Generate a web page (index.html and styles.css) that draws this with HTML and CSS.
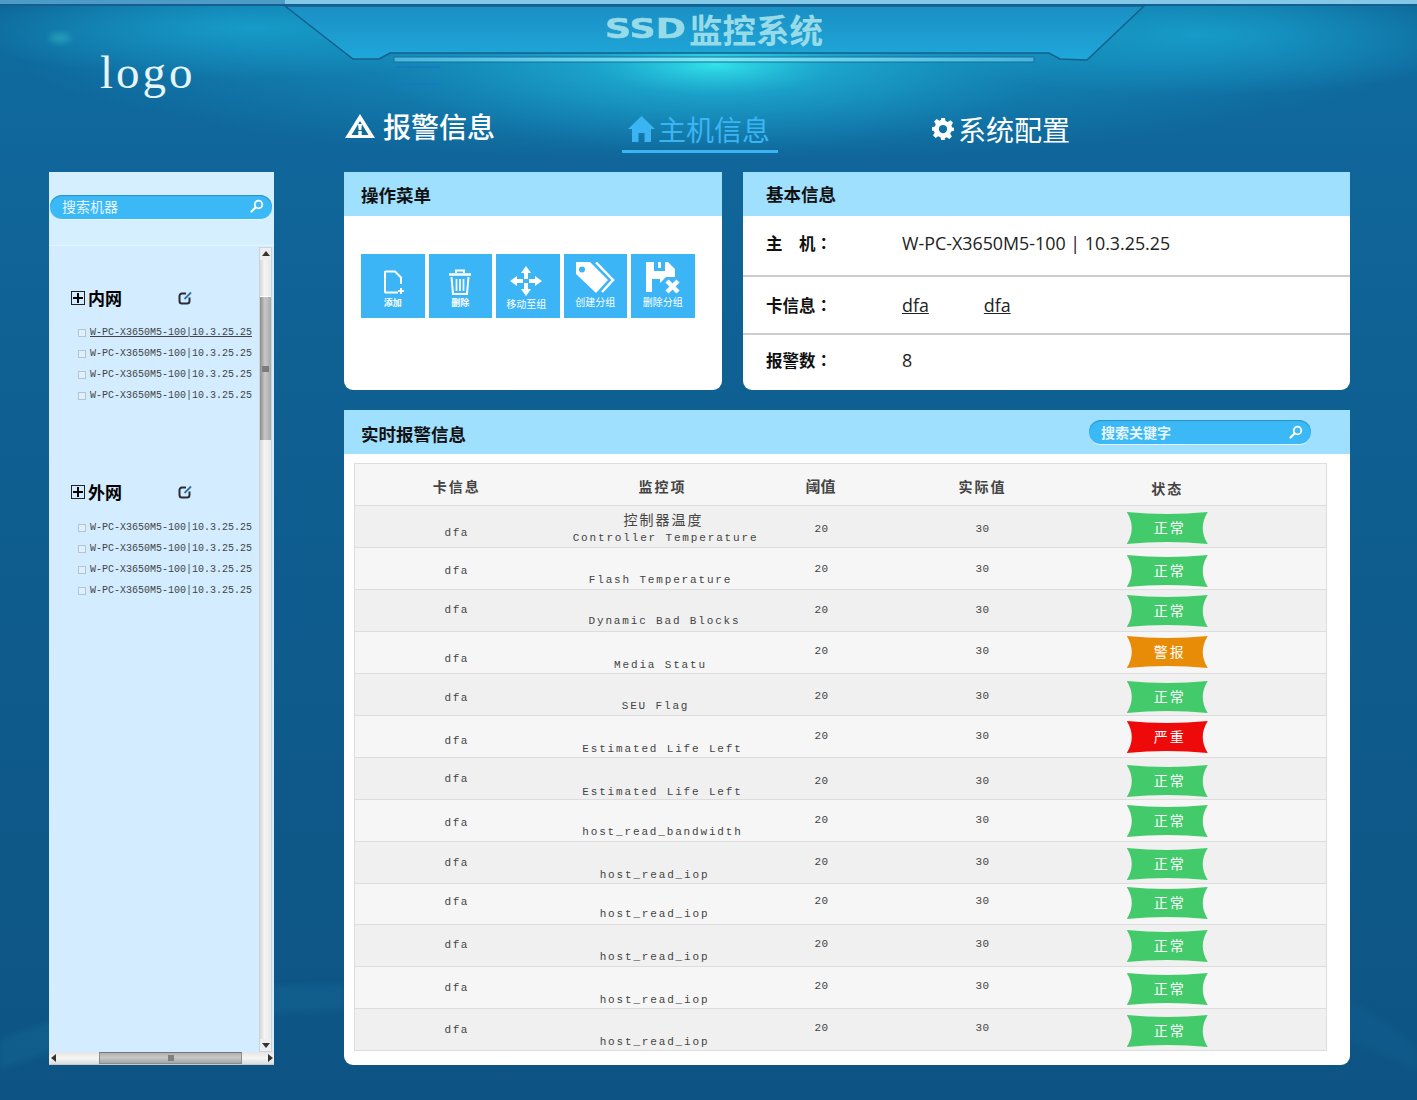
FILE: index.html
```html
<!DOCTYPE html>
<html lang="zh-CN">
<head>
<meta charset="utf-8">
<title>SSD监控系统</title>
<link rel="stylesheet" href="styles.css">
</head>
<body>
<svg class="decor" viewBox="0 0 1417 1100" preserveAspectRatio="none" aria-hidden="true">
  <defs>
    <radialGradient id="glow">
      <stop offset="0" stop-color="#33e8ec" stop-opacity=".95"/>
      <stop offset=".35" stop-color="#22bcdc" stop-opacity=".5"/>
      <stop offset="1" stop-color="#18a0cc" stop-opacity="0"/>
    </radialGradient>
    <radialGradient id="wide">
      <stop offset="0" stop-color="#18a4d0" stop-opacity=".8"/>
      <stop offset="1" stop-color="#18a4d0" stop-opacity="0"/>
    </radialGradient>
    <linearGradient id="plate" x1="0" y1="0" x2="0" y2="1">
      <stop offset="0" stop-color="#1a8fc4"/>
      <stop offset="1" stop-color="#1fa8da"/>
    </linearGradient>
    <linearGradient id="bar" x1="0" y1="0" x2="1" y2="0">
      <stop offset="0" stop-color="#4ab4dc"/>
      <stop offset=".5" stop-color="#7fe8f4"/>
      <stop offset="1" stop-color="#4ab4dc"/>
    </linearGradient>
    <filter id="soft" x="-10%" y="-30%" width="120%" height="160%"><feGaussianBlur stdDeviation="3"/></filter>
  </defs>
  <ellipse cx="715" cy="40" rx="720" ry="120" fill="url(#wide)"/>
  <ellipse cx="250" cy="28" rx="300" ry="50" fill="url(#wide)"/>
  <ellipse cx="1200" cy="35" rx="300" ry="60" fill="url(#wide)"/>
  <ellipse cx="715" cy="64" rx="340" ry="90" fill="url(#glow)"/>
  <path d="M285 6H1144L1087 60 1060 59 1049 53H390L379 59H353Z" fill="url(#plate)" stroke="#14608c" stroke-width="1.5"/>
  <rect x="394" y="57" width="640" height="5" fill="url(#bar)" stroke="#14709c"/>
  <rect x="0" y="0" width="285" height="4" fill="#4d9cc8"/>
  <rect x="285" y="0" width="1132" height="4" fill="#84c8e8"/>
  <rect x="0" y="4" width="1417" height="2" fill="#145f90"/>
  <path d="M395 67H440M395 84H440" stroke="#1878c0" stroke-width="2" opacity=".8"/>
  <ellipse cx="60" cy="38" rx="11" ry="5" fill="#3cc4c8" opacity=".45" filter="url(#soft)"/>
  <path d="M0 1040C100 1000 200 985 344 985V1010C200 1012 100 1030 0 1070Z" fill="#1a7ca8" opacity=".22" filter="url(#soft)"/>
  <path d="M1350 1000C1380 1020 1400 1030 1417 1050V1070L1350 1040Z" fill="#1a7ca8" opacity=".12" filter="url(#soft)"/>
</svg>

<header class="header">
  <div class="logo">logo</div>
  <div class="header-main">
    <h1 class="site-title"><span class="ssd">SSD</span><span class="site-cn">监控系统</span></h1>
    <nav class="nav">
      <a class="nav-item nav-alarm">
        <svg class="ico-warn" viewBox="0 0 30 24"><path fill-rule="evenodd" d="M15 0 30 24H0ZM15 7 6.500 21H23.500Z" fill="#fff"/><path d="M13 10H17L16.300 16H13.700ZM13.300 17H16.700V21H13.300Z" fill="#fff"/></svg>
        <span>报警信息</span>
      </a>
      <a class="nav-item nav-host">
        <svg class="ico-home" viewBox="0 0 27 26"><path d="M13.500 0 27 13H23V26H16.500V17H10.500V26H4V13H0Z" fill="#3bb4f4"/></svg>
        <span>主机信息</span>
      </a>
      <a class="nav-item nav-sys">
        <svg class="ico-gear" viewBox="0 0 24 24"><path fill-rule="evenodd" d="M10 0H14L14.800 3.300 17.200 4.300 20.100 2.500 22.900 5.300 21.100 8.200 22.100 10.300 24 10.500V14L20.900 14.800 19.900 17.200 21.700 20.100 18.900 22.900 16 21.100 14 22 14 24H10L9.200 20.900 6.800 19.900 3.900 21.700 1.100 18.900 2.900 16 1.900 13.800 0 14V10L3.100 9.200 4.100 6.800 2.300 3.900 5.100 1.100 8 2.900 10 2ZM12 7.500A4.500 4.500 0 1 0 12 16.500 4.500 4.500 0 1 0 12 7.500Z" fill="#fff"/></svg>
        <span>系统配置</span>
      </a>
    </nav>
  </div>
</header>

<main class="main">
  <aside class="sidebar">
    <div class="side-top">
      <div class="search search-side">
        <span>搜索机器</span>
        <svg class="ico-search" viewBox="0 0 14 14"><circle cx="8.500" cy="5.500" r="3.800" fill="none" stroke="#fff" stroke-width="1.800"/><path d="M5.500 8.500 1.500 12.500" stroke="#fff" stroke-width="2.200" stroke-linecap="round"/></svg>
      </div>
    </div>
    <div class="side-body">
      <div class="tree">
        <section class="group group-in">
          <div class="group-head">
            <span class="plus"></span><strong>内网</strong>
            <svg class="ico-edit" viewBox="0 0 15 14"><path d="M8 2.500H4A2.500 2.500 0 0 0 1.500 5V10A2.500 2.500 0 0 0 4 12.500H9A2.500 2.500 0 0 0 11.500 10V6.500" fill="none" stroke="#2b2b3a" stroke-width="2"/><path d="M6.500 8 13 1.500" stroke="#2f6fb0" stroke-width="1.800"/></svg>
          </div>
          <ul class="hosts">
            <li><i></i><a class="active">W-PC-X3650M5-100|10.3.25.25</a></li>
            <li><i></i><a>W-PC-X3650M5-100|10.3.25.25</a></li>
            <li><i></i><a>W-PC-X3650M5-100|10.3.25.25</a></li>
            <li><i></i><a>W-PC-X3650M5-100|10.3.25.25</a></li>
          </ul>
        </section>
        <section class="group group-out">
          <div class="group-head">
            <span class="plus"></span><strong>外网</strong>
            <svg class="ico-edit" viewBox="0 0 15 14"><path d="M8 2.500H4A2.500 2.500 0 0 0 1.500 5V10A2.500 2.500 0 0 0 4 12.500H9A2.500 2.500 0 0 0 11.500 10V6.500" fill="none" stroke="#2b2b3a" stroke-width="2"/><path d="M6.500 8 13 1.500" stroke="#2f6fb0" stroke-width="1.800"/></svg>
          </div>
          <ul class="hosts">
            <li><i></i><a>W-PC-X3650M5-100|10.3.25.25</a></li>
            <li><i></i><a>W-PC-X3650M5-100|10.3.25.25</a></li>
            <li><i></i><a>W-PC-X3650M5-100|10.3.25.25</a></li>
            <li><i></i><a>W-PC-X3650M5-100|10.3.25.25</a></li>
          </ul>
        </section>
      </div>
      <div class="vbar">
        <span class="arrow arrow-up"></span>
        <span class="vgap"></span>
        <span class="vthumb"><b></b></span>
        <span class="vrest"></span>
        <span class="arrow arrow-down"></span>
      </div>
    </div>
    <div class="hbar">
      <span class="arrow arrow-left"></span>
      <span class="hthumb"><b></b></span>
      <span class="arrow arrow-right"></span>
    </div>
  </aside>

  <div class="content">
    <div class="top-row">
      <section class="card card-ops">
        <h2 class="card-head">操作菜单</h2>
        <div class="ops">
          <a class="op op-a">
            <svg viewBox="0 0 24 28"><path d="M4 3.500H14L20 9.500V16M17 24.500H4Z" fill="none" stroke="#fff" stroke-width="2"/><path d="M4 3V25" stroke="#fff" stroke-width="2"/><path d="M20 20V26M17 23H23" stroke="#fff" stroke-width="2"/></svg>
            <span class="bold">添加</span>
          </a>
          <a class="op op-b">
            <svg viewBox="0 0 24 28"><path d="M1 6.500H23" stroke="#fff" stroke-width="2.400"/><path d="M8 5V2.500H16V5" fill="none" stroke="#fff" stroke-width="2"/><path d="M3.500 9 5 26H19L20.500 9" fill="none" stroke="#fff" stroke-width="2"/><path d="M8.500 11V23M12 11V23M15.500 11V23" stroke="#fff" stroke-width="1.700"/></svg>
            <span class="bold">删除</span>
          </a>
          <a class="op op-c">
            <svg viewBox="0 0 32 30"><path d="M16 0 21 7H18V13H14V7H11ZM16 30 11 23H14V17H18V23H21ZM0 15 7 10V13H13V17H7V20ZM32 15 25 20V17H19V13H25V10Z" fill="#fff"/></svg>
            <span>移动至组</span>
          </a>
          <a class="op op-d">
            <svg viewBox="0 0 40 32"><path fill-rule="evenodd" d="M1 0H15L33 18 21 31 1 12ZM7 4.500A3 3 0 1 0 7 10.500 3 3 0 1 0 7 4.500Z" fill="#fff"/><path d="M21 0.500 38 18 27 30" fill="none" stroke="#fff" stroke-width="2.500"/></svg>
            <span>创建分组</span>
          </a>
          <a class="op op-e">
            <svg viewBox="0 0 34 32"><path fill-rule="evenodd" d="M0 0H22L29 7V15H20L14 21V30H0ZM8 0V9H19V0H15V6H12V0ZM6 17H14V30H6Z" fill="#fff"/><path d="M21 19 32 30M32 19 21 30" stroke="#fff" stroke-width="4.500"/></svg>
            <span>删除分组</span>
          </a>
        </div>
      </section>

      <section class="card card-info">
        <h2 class="card-head">基本信息</h2>
        <dl class="info">
          <div class="info-row info-1"><dt lang="zh-TW">主&emsp;机：</dt><dd>W-PC-X3650M5-100 | 10.3.25.25</dd></div>
          <div class="info-row info-2"><dt lang="zh-TW">卡信息：</dt><dd><a>dfa</a><a>dfa</a></dd></div>
          <div class="info-row info-3"><dt lang="zh-TW">报警数：</dt><dd>8</dd></div>
        </dl>
      </section>
    </div>

    <section class="card panel">
      <div class="card-head panel-head">
        <h2>实时报警信息</h2>
        <div class="search search-panel">
          <span>搜索关键字</span>
          <svg class="ico-search" viewBox="0 0 14 14"><circle cx="8.500" cy="5.500" r="3.800" fill="none" stroke="#fff" stroke-width="1.800"/><path d="M5.500 8.500 1.500 12.500" stroke="#fff" stroke-width="2.200" stroke-linecap="round"/></svg>
        </div>
      </div>
      <table class="grid">
        <colgroup><col class="w1"><col class="w2"><col class="w3"><col class="w4"><col class="w5"></colgroup>
        <thead>
          <tr><th class="th1">卡信息</th><th class="th2">监控项</th><th class="th3">阈值</th><th class="th4">实际值</th><th class="th5">状态</th></tr>
        </thead>
        <tbody>
          <tr class="r r1"><td class="c">dfa</td><td class="i"><span class="cn">控制器温度</span><br>Controller Temperature</td><td class="t">20</td><td class="t a">30</td><td class="b"><span class="badge ok">正常</span></td></tr>
          <tr class="r r2"><td class="c">dfa</td><td class="i">Flash Temperature</td><td class="t">20</td><td class="t a">30</td><td class="b"><span class="badge ok">正常</span></td></tr>
          <tr class="r r3"><td class="c">dfa</td><td class="i">Dynamic Bad Blocks</td><td class="t">20</td><td class="t a">30</td><td class="b"><span class="badge ok">正常</span></td></tr>
          <tr class="r r4"><td class="c">dfa</td><td class="i">Media Statu</td><td class="t">20</td><td class="t a">30</td><td class="b"><span class="badge warn">警报</span></td></tr>
          <tr class="r r5"><td class="c">dfa</td><td class="i">SEU Flag</td><td class="t">20</td><td class="t a">30</td><td class="b"><span class="badge ok">正常</span></td></tr>
          <tr class="r r6"><td class="c">dfa</td><td class="i">Estimated Life Left</td><td class="t">20</td><td class="t a">30</td><td class="b"><span class="badge bad">严重</span></td></tr>
          <tr class="r r7"><td class="c">dfa</td><td class="i">Estimated Life Left</td><td class="t">20</td><td class="t a">30</td><td class="b"><span class="badge ok">正常</span></td></tr>
          <tr class="r r8"><td class="c">dfa</td><td class="i">host_read_bandwidth</td><td class="t">20</td><td class="t a">30</td><td class="b"><span class="badge ok">正常</span></td></tr>
          <tr class="r r9"><td class="c">dfa</td><td class="i">host_read_iop</td><td class="t">20</td><td class="t a">30</td><td class="b"><span class="badge ok">正常</span></td></tr>
          <tr class="r r10"><td class="c">dfa</td><td class="i">host_read_iop</td><td class="t">20</td><td class="t a">30</td><td class="b"><span class="badge ok">正常</span></td></tr>
          <tr class="r r11"><td class="c">dfa</td><td class="i">host_read_iop</td><td class="t">20</td><td class="t a">30</td><td class="b"><span class="badge ok">正常</span></td></tr>
          <tr class="r r12"><td class="c">dfa</td><td class="i">host_read_iop</td><td class="t">20</td><td class="t a">30</td><td class="b"><span class="badge ok">正常</span></td></tr>
          <tr class="r r13"><td class="c">dfa</td><td class="i">host_read_iop</td><td class="t">20</td><td class="t a">30</td><td class="b"><span class="badge ok">正常</span></td></tr>
        </tbody>
      </table>
    </section>
  </div>
</main>
</body>
</html>
```
FILE: styles.css
```css
* { box-sizing: border-box; }
html, body { margin: 0; padding: 0; }
body {
  width: 1417px;
  height: 1100px;
  overflow: hidden;
  position: relative;
  font-family: "Noto Sans CJK SC", "Liberation Sans", sans-serif;
  background:
    linear-gradient(180deg, #0d6496 0, #0f6a9e 60px, #10669a 160px, #0f5f92 420px, #0e5989 800px, #0d5484 1100px);
}
.decor { position: absolute; left: 0; top: 0; width: 1417px; height: 1100px; }
h1, h2, dl, dd, ul { margin: 0; padding: 0; }
ul { list-style: none; }

.header { position: relative; height: 172px; display: flex; }
.logo {
  width: 344px;
  padding: 42px 0 0 100px;
  font: 47px/60px "Liberation Serif", serif;
  letter-spacing: 3px;
  color: #e6f5fa;
}
.header-main { flex: 1; display: flex; flex-direction: column; }
.site-title {
  height: 100px;
  padding: 8px 0 0 261px;
  display: flex;
  align-items: flex-start;
  color: #97dbe9;
  font-weight: 700;
  white-space: nowrap;
}
.ssd {
  width: 83px;
  font: 700 26px/42px "DejaVu Sans", sans-serif;
  letter-spacing: 0;
  -webkit-text-stroke: .5px #97dbe9;
  transform: scaleX(1.4);
  transform-origin: left center;
}
.site-cn { font-size: 33.500px; line-height: 42px; letter-spacing: 0; margin-left: 1px; }

.nav { display: flex; align-items: flex-start; color: #fff; }
.nav-item { display: flex; align-items: center; font-size: 28px; line-height: 40px; white-space: nowrap; }
.nav-alarm { width: 278px; padding-left: 1px; margin-top: 6px; font-weight: 500; }
.ico-warn { width: 30px; height: 24px; margin-right: 8px; }
.nav-host { width: 156px; height: 53px; padding: 8px 0 0 6px; border-bottom: 3px solid #3bb4f4; color: #3bb4f4; }
.ico-home { width: 27px; height: 26px; margin-right: 3px; }
.nav-sys { margin: 9px 0 0 154px; }
.ico-gear { width: 22px; height: 22px; margin-right: 4px; }

.main { position: relative; display: flex; padding-left: 49px; gap: 70px; }

.sidebar { width: 225px; height: 893px; background: #d3ecff; display: flex; flex-direction: column; }
.side-top { height: 74px; padding: 23px 2px 0 1px; background: #d6efff; border-bottom: 1px solid #e4f5ff; }
.search {
  display: flex;
  align-items: center;
  justify-content: space-between;
  background: #3bb9f6;
  border-radius: 12px;
  color: #e8f6ff;
  font-size: 14px;
  border-bottom: 1px solid #e8f8ff;
  box-shadow: inset 0 1px 1px #2b8fca;
}
.search-side { height: 25px; padding: 0 8px 2px 12px; }
.search-panel { width: 222px; height: 25px; padding: 0 8px 0 12px; }
.ico-search { width: 14px; height: 14px; }

.side-body { flex: 1; display: flex; min-height: 0; }
.tree { flex: 1; }
.group-in { padding: 42px 0 0 22px; }
.group-out { padding: 76px 0 0 22px; }
.group-head { display: flex; align-items: center; height: 20px; color: #000; }
.group-head strong { font-size: 17px; font-weight: 700; line-height: 20px; margin-left: 3px; width: 90px; letter-spacing: 0; }
.plus {
  width: 14px; height: 14px;
  border: 1px solid #222;
  background:
    linear-gradient(#000, #000) center / 10px 2px no-repeat,
    linear-gradient(#000, #000) center / 2px 10px no-repeat;
}
.ico-edit { width: 15px; height: 14px; }
.hosts { margin-top: 14px; padding-left: 7px; }
.group-out .hosts { margin-top: 15px; }
.hosts li { display: flex; align-items: center; height: 21px; }
.hosts i { width: 8px; height: 8px; border: 1px solid #b4c4d0; background: #dff0fc; margin-right: 4px; }
.hosts a { font: 10px/14px "Liberation Mono", monospace; letter-spacing: 0; color: #444; white-space: nowrap; }
.hosts a.active { text-decoration: underline; }

.vbar { width: 13px; margin: 1px 2px 0 0; display: flex; flex-direction: column; background: #e8e8e8; border: 1px solid #c9d3da; }
.vgap { height: 36px; background: linear-gradient(90deg, #d6d6d6, #f4f4f4 40%, #e8e8e8); }
.vrest { flex: 1; background: linear-gradient(90deg, #d6d6d6, #f4f4f4 40%, #e8e8e8); }
.vthumb {
  height: 144px;
  display: flex; align-items: center; justify-content: center;
  background: linear-gradient(90deg, #8c8c8c, #c8c8c8 45%, #a8a8a8);
  border-top: 1px solid #fff;
}
.vthumb b { width: 7px; height: 6px; background: #7c7c7c; }
.arrow { flex: none; position: relative; width: 11px; height: 12px; background: #eee; }
.arrow::after { content: ""; position: absolute; width: 0; height: 0; border: 4px solid transparent; }
.arrow-up::after { left: 1.500px; top: -1px; border-bottom: 5px solid #333; }
.arrow-down::after { left: 1.500px; top: 4px; border-top: 5px solid #333; }
.arrow-left::after { left: -2px; top: 2px; border-right: 5px solid #333; }
.arrow-right::after { left: 5px; top: 2px; border-left: 5px solid #333; }

.hbar { height: 13px; display: flex; align-items: center; justify-content: space-between; background: linear-gradient(#e4e4e4, #f6f6f6 50%, #dcdcdc); border-bottom: 1px solid #c8c8c8; }
.arrow-left, .arrow-right { background: transparent; }
.hthumb {
  flex: none;
  width: 143px; height: 12px;
  margin-left: 39px; margin-right: 21px;
  display: flex; align-items: center; justify-content: center;
  background: linear-gradient(#b0b0b0, #c8c8c8 45%, #a4a4a4);
  border: 1px solid #8c8c8c;
  border-top-color: #777;
}
.hthumb b { width: 6px; height: 6px; background: #808080; }

.content { width: 1006px; }
.top-row { display: flex; gap: 21px; height: 218px; }
.card { background: #fff; border-radius: 0 0 9px 9px; overflow: hidden; }
.card-ops { width: 378px; }
.card-info { width: 607px; }
.card-head { height: 44px; background: #a0e0ff; color: #111; font-size: 17.500px; font-weight: 700; line-height: 46px; padding-left: 17px; }
.card-info .card-head { padding-left: 23px; line-height: 44px; }

.ops { display: flex; padding: 38px 0 0 17px; gap: 4px; }
.op {
  flex: none;
  width: 63.500px; height: 64px;
  background: #3bb5f6;
  color: #fff;
  display: flex; flex-direction: column; align-items: center;
  font-size: 10px; line-height: 12px;
  white-space: nowrap;
}
.op svg { flex: none; }
.op .bold { font-weight: 700; font-size: 9px; }
.op-a svg, .op-b svg { width: 24px; height: 28px; margin: 14px 0 1px; }
.op-c { padding-right: 3px; }
.op-c svg { width: 32px; height: 30px; margin: 12px 0 2px; }
.op-d svg { width: 40px; height: 32px; margin: 8px 0 2px; }
.op-e svg { width: 34px; height: 32px; margin: 8px 0 2px; }

.info { color: #111; }
.info-row { display: flex; padding-left: 23px; align-items: center; }
.info-row dt { width: 136px; font-family: "Noto Sans CJK TC", sans-serif; font-size: 16.500px; font-weight: 700; }
.info-row dd { font: 17.850px/24px "Open Sans", sans-serif; color: #222; }
.info-row dd a { text-decoration: underline; margin-right: 55px; }
.info-1 { height: 61px; border-bottom: 2px solid #ccc; padding-bottom: 6px; }
.info-2 { height: 58px; border-bottom: 2px solid #ccc; }
.info-3 { height: 55px; padding-bottom: 5px; }

.panel { margin-top: 20px; height: 655px; }
.panel-head { display: flex; justify-content: space-between; align-items: center; padding-right: 39px; }
.panel-head h2 { font-size: 17.500px; line-height: 48px; color: #111; align-self: flex-start; }

.grid { margin: 9px 0 0 10px; width: 972px; table-layout: fixed; border-collapse: collapse; border: 1px solid #ddd; color: #444; }
.w1 { width: 204px; } .w2 { width: 208px; } .w3 { width: 110px; } .w4 { width: 212px; } .w5 { width: 238px; }
th {
  height: 42px; padding: 12px 0 0;
  vertical-align: top;
  background: #f6f6f6;
  font-size: 14px; line-height: 20px; font-weight: 700;
  letter-spacing: 2px;
  border-bottom: 1px solid #ddd;
}
.th3 { letter-spacing: 0; font-size: 15px; padding-right: 2px; }
.th5 { padding-right: 80px; padding-top: 14px; }
.r td {
  height: 42px;
  vertical-align: top;
  text-align: center;
  padding: 0;
  border-bottom: 1px solid #ddd;
  font: 11px/14px "Liberation Mono", monospace;
}
.r:nth-child(odd) td { background: #f0f0f0; }
.r:nth-child(even) td { background: #f6f6f6; }
.r td.c { padding-top: var(--c); letter-spacing: 1.500px; }
.r td.i { padding-top: var(--i); padding-left: var(--x, 0); padding-right: var(--y, 0); letter-spacing: 1.840px; white-space: nowrap; }
.r td.t { padding-top: var(--t); letter-spacing: .5px; }
.r td.b { padding-top: var(--b); padding-right: 80px; line-height: 0; }
.cn { font: 14px/14px "Noto Sans CJK SC", sans-serif; letter-spacing: 2px; margin-right: 4px; }
.badge {
  display: inline-block;
  width: 81px; height: 32px;
  padding-left: 5px;
  color: #fff;
  font: 14px/30px "Noto Sans CJK SC", sans-serif;
  letter-spacing: 2px;
  clip-path: path("M0 0Q40 4 81 0Q71 16 81 32Q40 28 0 32Q10 16 0 0Z");
}
.ok { background: #43cb6b; }
.warn { background: #e88c08; }
.bad { background: #ee0a0a; }

.r1 { --c: 19px; --t: 15px; --i: 6px; --b: 6px; --x: 6px; }
.r1 td { line-height: 16px; }
.r2 { --c: 16px; --t: 14px; --i: 25px; --b: 7px; --y: 4px; }
.r3 { --c: 13px; --t: 13px; --i: 24px; --b: 5px; --x: 4px; }
.r4 { --c: 20px; --t: 12px; --i: 26px; --b: 4px; --y: 4px; }
.r5 { --c: 17px; --t: 15px; --i: 25px; --b: 7px; --y: 14px; }
.r6 { --c: 18px; --t: 13px; --i: 26px; --b: 5px; }
.r7 { --c: 14px; --t: 16px; --i: 27px; --b: 7px; }
.r8 { --c: 16px; --t: 13px; --i: 25px; --b: 5px; }
.r9 { --c: 14px; --t: 13px; --i: 26px; --b: 6px; --y: 16px; }
.r10 { --c: 11px; --t: 10px; --i: 23px; --b: 3px; --y: 16px; }
.r10 td { height: 41px; }
.r11 { --c: 13px; --t: 12px; --i: 25px; --b: 5px; --y: 16px; }
.r12 { --c: 14px; --t: 12px; --i: 26px; --b: 6px; --y: 16px; }
.r13 { --c: 14px; --t: 12px; --i: 26px; --b: 6px; --y: 16px; }
```
